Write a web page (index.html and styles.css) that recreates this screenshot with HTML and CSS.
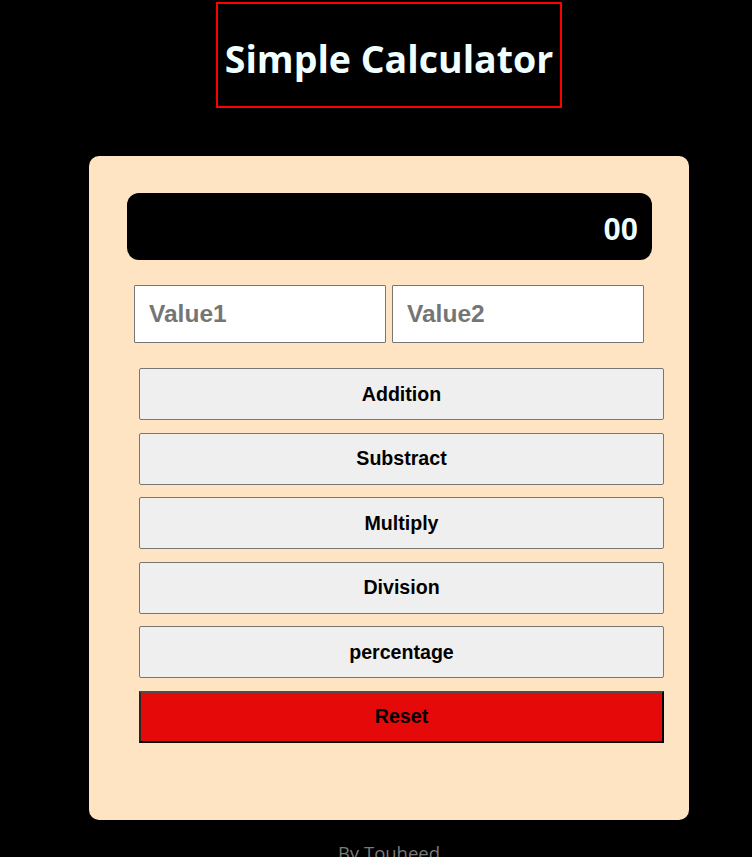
FILE: index.html
```html
<!DOCTYPE html>
<html>
  <head>
    <meta charset="utf-8">
    <title>Simple Calculator</title>
    <link rel="stylesheet" href="styles.css">
  </head>
  <body>
    <div class="page">
      <h1 class="title">Simple Calculator</h1>
      <div class="calc">
        <div class="screen" id="result">00</div>
        <div class="inputs">
          <input type="number" id="val1" class="val" placeholder="Value1">
          <input type="number" id="val2" class="val" placeholder="Value2">
        </div>
        <div class="ops">
          <button class="op">Addition</button>
          <button class="op">Substract</button>
          <button class="op">Multiply</button>
          <button class="op">Division</button>
          <button class="op">percentage</button>
          <button class="op reset">Reset</button>
        </div>
      </div>
      <p class="footer">By Touheed</p>
    </div>
  </body>
</html>
```

FILE: styles.css
```css
body {
  margin: 0;
  background: #000;
  font-family: "Liberation Sans", Arial, sans-serif;
}

.page {
  display: flex;
  flex-direction: column;
  align-items: center;
  padding: 2px 0 0 26px;
}

.title {
  margin: 0;
  padding: 0 7px;
  height: 102px;
  line-height: 110px;
  border: 2px solid #f00;
  color: #f0ffff;
  font-family: "Open Sans", "Noto Sans", sans-serif;
  font-size: 37.5px;
  font-weight: 700;
  letter-spacing: 0;
}

.calc {
  box-sizing: border-box;
  width: 600px;
  height: 664px;
  margin-top: 48px;
  padding: 37px 37px 0 38px;
  background: #ffe4c4;
  border-radius: 10px;
}

.screen {
  box-sizing: border-box;
  height: 67px;
  padding: 0 14px;
  border-radius: 12px;
  background: #000;
  color: #f0ffff;
  font-size: 31px;
  font-weight: 700;
  text-align: right;
  line-height: 73px;
}

.inputs {
  display: flex;
  gap: 6px;
  margin: 25px 8px 0 7px;
}

.val {
  box-sizing: border-box;
  width: 252px;
  height: 58px;
  padding: 0 14px;
  border: 1px solid #767676;
  border-radius: 1px;
  background: #fff;
  font-family: "Liberation Sans", Arial, sans-serif;
  font-size: 24.5px;
  font-weight: 700;
  outline: none;
}

.val::placeholder {
  color: #757575;
}

.ops {
  display: flex;
  flex-direction: column;
  gap: 12.6px;
  margin: 25px -12px 0 12px;
}

.op {
  box-sizing: border-box;
  height: 52px;
  border: 1px solid #767676;
  border-radius: 2px;
  background: #efefef;
  color: #000;
  font-family: "Liberation Sans", Arial, sans-serif;
  font-size: 19.6px;
  font-weight: 700;
}

.reset {
  background: #e50909;
  border: 2px solid;
  border-color: #544a4a #000 #000 #2a2525;
  border-radius: 0;
}

.footer {
  margin: 20px 0 0;
  color: #7a7a7a;
  font-family: "Open Sans", "Noto Sans", sans-serif;
  font-size: 18.5px;
  font-weight: 400;
}
```
